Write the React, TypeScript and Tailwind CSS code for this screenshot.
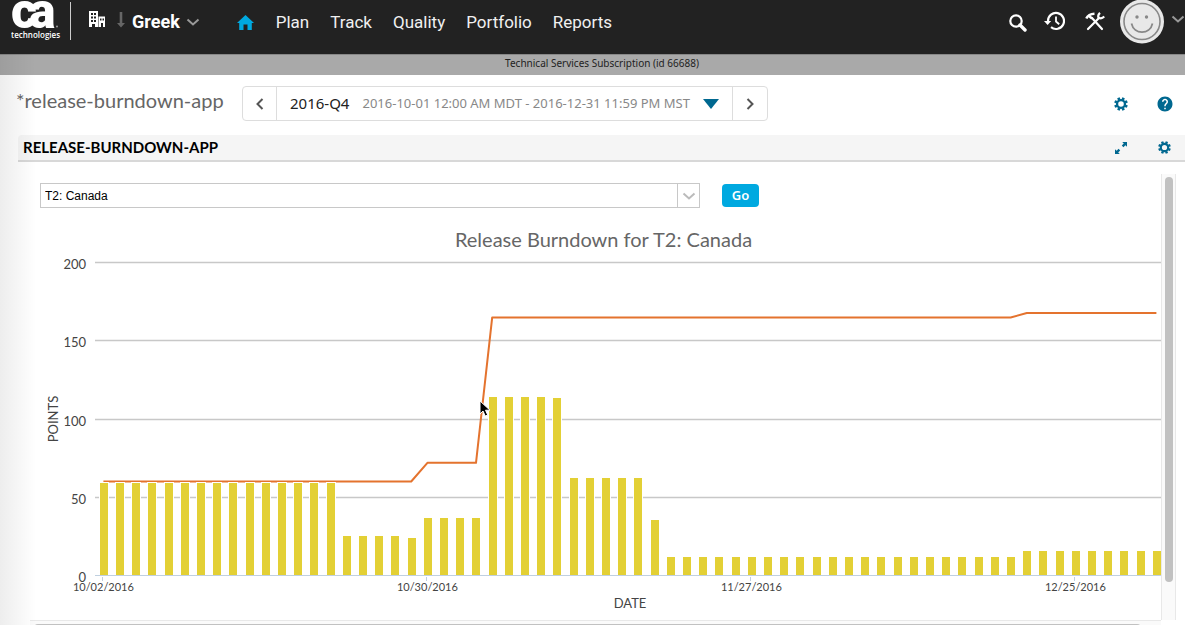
import React from "react";
import { MdHelp } from "react-icons/md";

const PITCH = 16.2;
const X0 = 73.4;
const BASE = 347;
const UNIT = 1.565;

const repeat = (value: number, times: number): number[] => Array(times).fill(value);

const remaining: number[] = [
  ...repeat(60, 15),
  ...repeat(26.5, 4),
  25,
  ...repeat(37.7, 4),
  ...repeat(115, 4),
  114.5,
  ...repeat(63, 5),
  36.5,
  ...repeat(12.9, 22),
  ...repeat(16.6, 9),
];

const scope: [number, number][] = [
  [0, 60.4],
  [19, 60.4],
  [20, 72.3],
  [23, 72.3],
  [24, 165.2],
  [56, 165.2],
  [57, 168],
  [65, 168],
];

const ticks: [number, string][] = [
  [0, "10/02/2016"],
  [20, "10/30/2016"],
  [40, "11/27/2016"],
  [60, "12/25/2016"],
];

const gridValues = [0, 50, 100, 150, 200];

const xAt = (i: number) => X0 + i * PITCH;
const yAt = (v: number) => BASE - v * UNIT;

function Gear({ className }: { className: string }) {
  return (
    <svg viewBox="0 0 16 16" className={className} fill="none" stroke="currentColor" aria-hidden="true">
      <circle cx="8" cy="8" r="4.5" strokeWidth="2.6" />
      {[0, 45, 90, 135, 180, 225, 270, 315].map((a) => (
        <path key={a} d="M8 3V0.2" strokeWidth="3" transform={`rotate(${a + 22.5} 8 8)`} />
      ))}
    </svg>
  );
}

function Chevron({ d, className }: { d: string; className: string }) {
  return (
    <svg viewBox="0 0 14 14" className={className} fill="none" stroke="currentColor" aria-hidden="true">
      <path d={d} />
    </svg>
  );
}

const DOWN = "M1.5 4.5L7 9.5l5.5-5";

function Logo() {
  return (
    <svg viewBox="0 0 50 40" className="h-10 w-[50px] shrink-0" fill="#fff" role="img" aria-label="ca technologies">
      <g fontFamily="Roboto, sans-serif" fontWeight="900" fontSize="50">
        <text x="0" y="28">c</text>
        <text x="18" y="28">a</text>
      </g>
      <circle cx="46" cy="26.500" r="1" fill="#999" />
      <text x="0" y="38" fontFamily="Open Sans, sans-serif" fontWeight="600" fontSize="8">technologies</text>
    </svg>
  );
}

function Header() {
  return (
    <header className="flex h-[54px] items-start bg-[#222] pl-[11px] text-white">
      <Logo />
      <span className="ml-[9px] mt-0.5 h-[38px] w-px bg-[#ccc]" />
      <button aria-label="Workspace" className="ml-[18px] mt-[11px]">
        <svg viewBox="0 0 17 17" className="size-[17px]" fill="#fff">
          <path fillRule="evenodd" d="M0 0h9v16H6v-3H3v3H0zM2 2v2h2V2zM5 2v2h2V2zM2 5.500v2h2v-2zM5 5.500v2h2v-2zM2 9v2h2V9zM5 9v2h2V9z" />
          <path fillRule="evenodd" d="M9.500 5.500H16V16h-2v-4h-2v4H9.500zM11 7.500v2h1.500v-2zM13.500 7.500v2H15v-2z" />
        </svg>
      </button>
      <svg viewBox="0 0 8 16" className="ml-[11px] mt-3 h-4 w-2" fill="#666" aria-hidden="true">
        <path d="M2.700 0h2.600v11H8L4 15.500 0 11h2.700z" />
      </svg>
      <button className="ml-[7px] mt-2 flex items-center gap-1.5 font-['Roboto'] text-lg font-bold">
        Greek
        <Chevron d={DOWN} className="size-[14px] stroke-2 text-[#999]" />
      </button>
      <nav className="ml-[37px] mt-2 flex items-center font-['Roboto'] text-[17px] leading-7 text-[#f0f0f0]">
        <a href="#home" aria-label="Home" className="mr-[22px]">
          <svg viewBox="0 0 17 15" className="h-[15px] w-[17px]" fill="#00a9e0">
            <path d="M8.500 0L17 8h-2.200v7H10.500V9.500h-4V15H2.200V8H0l8.500-8z" />
          </svg>
        </a>
        <div className="flex gap-[21px]">
          {["Plan", "Track", "Quality", "Portfolio", "Reports"].map((item) => (
            <a key={item} href={"#" + item.toLowerCase()}>{item}</a>
          ))}
        </div>
      </nav>
      <div className="ml-auto flex items-start">
        <button aria-label="Search" className="mr-[17px] mt-[14px]">
          <svg viewBox="0 0 18 18" className="size-[18px]" fill="none" stroke="#fff">
            <circle cx="7" cy="7" r="5.700" strokeWidth="2.200" />
            <path d="M11 11l5 5" strokeWidth="3.400" strokeLinecap="round" />
          </svg>
        </button>
        <button aria-label="History" className="mr-5 mt-[11px]">
          <svg viewBox="0 0 21 20" className="h-5 w-[21px]" fill="none" stroke="#fff">
            <path d="M4 10A8 8 0 1 1 7 16.200" strokeWidth="2.200" />
            <path d="M0 10h7.200L3.600 14z" fill="#fff" stroke="none" />
            <path d="M12 5.500V10.500l3.200 2.800" strokeWidth="1.800" />
          </svg>
        </button>
        <button aria-label="Setup" className="mr-[15px] mt-3">
          <svg viewBox="0 0 20 19" className="h-[19px] w-5" fill="none" stroke="#fff">
            <path d="M7 6L17 17" strokeWidth="2.200" strokeLinecap="round" />
            <path d="M1.300 6.500Q3.500 2 9.500 1.800" strokeWidth="2.600" />
            <path d="M4 4L7 6.500" strokeWidth="2.400" />
            <path d="M3 17L13.500 6.500" strokeWidth="2.200" strokeLinecap="round" />
            <path d="M15 0.800Q12.500 3 13.500 5.500Q16.500 7.500 19.300 4.500" strokeWidth="2.200" />
          </svg>
        </button>
        <button aria-label="Profile" className="mr-[7px]">
          <svg viewBox="0 0 44 44" className="size-11" fill="none" stroke="#888">
            <circle cx="22" cy="21.500" r="22" fill="#e8e8e8" stroke="none" />
            <circle cx="22" cy="21.500" r="18" strokeWidth="1.600" />
            <circle cx="17" cy="17" r="1.700" fill="#888" stroke="none" />
            <circle cx="26.500" cy="17" r="1.700" fill="#888" stroke="none" />
            <path d="M11.500 23.500C14 35 30 35 32.500 23.500" strokeWidth="1.800" />
          </svg>
        </button>
        <Chevron d={DOWN} className="mt-3 size-[14px] stroke-2 text-[#999]" />
      </div>
    </header>
  );
}

function Toolbar() {
  return (
    <div className="flex items-center pb-[14px] pl-4 pr-[11px] pt-[11px]">
      <h1 className="w-[226px] self-start font-['Lato'] text-xl text-[#666]">*release-burndown-app</h1>
      <div className="flex h-[35px] items-stretch rounded border border-[#ddd] font-['Noto_Sans']">
        <button aria-label="Previous" className="flex w-[34px] items-center justify-center border-r border-[#ddd] text-[#555]">
          <Chevron d="M9.500 2l-5 5 5 5" className="size-[14px] stroke-2" />
        </button>
        <button className="flex items-center px-[13px]">
          <span className="text-[15px] text-[#222]">2016-Q4</span>
          <span className="ml-[13px] text-[13px] text-[#888]">2016-10-01 12:00 AM MDT - 2016-12-31 11:59 PM MST</span>
          <svg viewBox="0 0 16 10" className="ml-[13px] h-2.5 w-4" fill="#006890" aria-hidden="true">
            <path d="M0 0h16L8 10z" />
          </svg>
        </button>
        <button aria-label="Next" className="flex w-[35px] items-center justify-center border-l border-[#ddd] text-[#555]">
          <Chevron d="M4.500 2l5 5-5 5" className="size-[14px] stroke-2" />
        </button>
      </div>
      <div className="ml-auto flex items-center gap-7 text-[#006890]">
        <button aria-label="Page settings"><Gear className="size-[14px]" /></button>
        <button aria-label="Help"><MdHelp className="size-[18px]" /></button>
      </div>
    </div>
  );
}

function Chart() {
  return (
    <svg viewBox="0 16 1131 375" className="block h-auto w-full" role="img" aria-label="Release burndown chart">
      <g fontFamily="Lato, sans-serif" fontSize="13" fill="#444">
        {gridValues.map((v) => (
          <g key={v}>
            {v > 0 && <path d={`M65 ${Math.round(yAt(v)) - 0.5}H1131`} stroke="#c8c8c8" strokeWidth="1.5" />}
            <text x="56" y={Math.round(yAt(v)) + 6} textAnchor="end">{v}</text>
          </g>
        ))}
        {ticks.map(([i, label]) => (
          <g key={label}>
            <path d={`M${Math.floor(xAt(i)) - 0.5} ${BASE}v5`} stroke="#c0d0e0" />
            <text x={xAt(i)} y="362" textAnchor="middle" fontSize="11">{label}</text>
          </g>
        ))}
        <text x="600" y="379" textAnchor="middle">DATE</text>
        <text transform="translate(28 190) rotate(-90)" textAnchor="middle">POINTS</text>
      </g>
      <polyline
        points={scope.map(([i, v]) => `${xAt(i)},${yAt(v)}`).join(" ")}
        fill="none"
        stroke="#e4732e"
        strokeWidth="2"
        strokeLinejoin="round"
      />
      {remaining.map((v, i) => {
        const top = Math.round(yAt(v));
        return (
          <rect key={i} x={Math.round(xAt(i) - 3.6) - 0.5} y={top + 0.5} width="9" height={BASE - top} fill="#e3d035" stroke="#fff" />
        );
      })}
      <path d={`M65 ${BASE - 0.5}H1131`} stroke="#c0d0e0" />
    </svg>
  );
}

function Pointer() {
  return (
    <svg viewBox="0 0 12 18" className="absolute left-[479px] top-[400px] h-[18px] w-3" aria-hidden="true">
      <path d="M1 1v13l3-3 2.200 5 2.500-1-2.200-4.800H11z" fill="#000" stroke="#fff" />
    </svg>
  );
}

export default function App() {
  return (
    <div className="relative h-screen overflow-hidden bg-white">
      <Header />
      <div className="flex h-[21px] items-start justify-center border-t border-[#888] bg-[#a9a9a9] pl-[19px] font-['Noto_Sans'] text-[10px] leading-4 text-[#222]">
        Technical Services Subscription (id 66688)
      </div>
      <Toolbar />
      <section>
        <div className="ml-[18px] flex h-[27px] items-center rounded-tl border-b-2 border-[#d8d8d8] bg-[#f5f5f5] pl-[5px] pr-[14px]">
          <h2 className="font-['Lato'] text-[15px] font-bold text-black">RELEASE-BURNDOWN-APP</h2>
          <div className="ml-auto flex items-center gap-[31px] text-[#006890]">
            <button aria-label="Expand">
              <svg viewBox="0 0 12 12" className="size-3" fill="currentColor">
                <path d="M7.200 0H12v4.800l-1.600-1.600-2 2-1.600-1.600 2-2zM4.800 12H0V7.200l1.600 1.600 2-2 1.600 1.600-2 2z" />
              </svg>
            </button>
            <button aria-label="App settings"><Gear className="size-[13px]" /></button>
          </div>
        </div>
        <div className="mt-3 flex">
          <div className="min-w-0 flex-1 pl-[30px]">
            <form className="flex items-center pl-2.5 pt-[9px]" onSubmit={(e) => e.preventDefault()}>
              <div className="relative w-[660px]">
                <select aria-label="Release project" className="block h-[25px] w-full appearance-none border border-[#c8c8c8] bg-white pl-1 font-['Liberation_Sans'] text-xs text-black">
                  <option>T2: Canada</option>
                </select>
                <span className="pointer-events-none absolute inset-y-0 right-0 flex w-[23px] items-center justify-center border-l border-[#c8c8c8] text-[#bbb]">
                  <Chevron d={DOWN} className="size-[14px] stroke-2" />
                </span>
              </div>
              <button className="ml-[22px] h-[23px] w-[37px] rounded-sm bg-[#00a9e0] font-['Noto_Sans'] text-[13px] font-semibold text-white">Go</button>
            </form>
            <h3 className="mt-[17px] h-5 pl-4 text-center font-['Lato'] text-xl leading-7 text-[#666]">
              Release Burndown for T2: Canada
            </h3>
            <Chart />
          </div>
          <div className="mr-[9px] flex h-[446px] w-[15px] justify-center border-x border-[#e8e8e8] bg-[#fafafa] pt-[3px]">
            <div className="h-[405px] w-2 rounded-full bg-[#c1c1c1]" />
          </div>
        </div>
        <div className="ml-[30px] mr-6 border-t border-[#e8e8e8] bg-[#fafafa] px-1 pt-[3px]">
          <div className="mr-4 h-2 rounded-full bg-[#c1c1c1]" />
        </div>
      </section>
      <div className="pointer-events-none absolute bottom-0 left-0 top-[54px] w-9 bg-linear-to-r from-black/7 to-transparent" />
      <Pointer />
    </div>
  );
}
